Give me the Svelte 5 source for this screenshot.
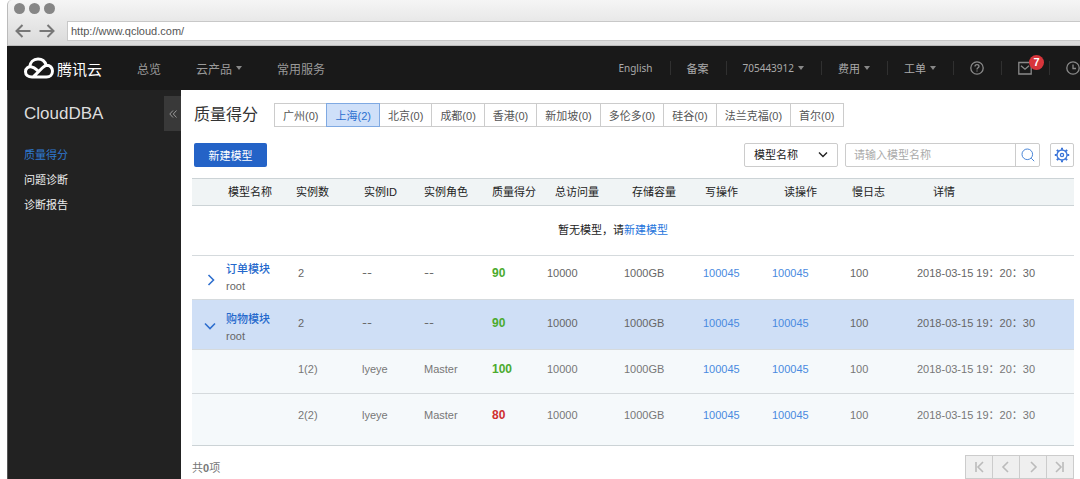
<script>
    let url = 'http://www.qcloud.com/';
    let region = '上海';
    let section = '质量得分';
    let searchField = 'name';
    let keyword = '';

    const sections = ['质量得分', '问题诊断', '诊断报告'];

    const regions = [
        { name: '广州', count: 0 },
        { name: '上海', count: 2 },
        { name: '北京', count: 0 },
        { name: '成都', count: 0 },
        { name: '香港', count: 0 },
        { name: '新加坡', count: 0 },
        { name: '多伦多', count: 0 },
        { name: '硅谷', count: 0 },
        { name: '法兰克福', count: 0 },
        { name: '首尔', count: 0 }
    ];

    const usage = { visits: '10000', storage: '1000GB', writes: '100045', reads: '100045', slow: '100', detail: '2018-03-15 19：20：30' };

    let models = [
        { name: '订单模块', owner: 'root', count: '2', score: 90, open: false, instances: [], ...usage },
        {
            name: '购物模块', owner: 'root', count: '2', score: 90, open: true, ...usage,
            instances: [
                { no: '1(2)', id: 'lyeye', role: 'Master', score: 100, ...usage },
                { no: '2(2)', id: 'lyeye', role: 'Master', score: 80, ...usage }
            ]
        }
    ];

    const pager = [
        { label: '首页', d: 'M4 2v10M11 2 6 7l5 5' },
        { label: '上一页', d: 'M9 2 4 7l5 5' },
        { label: '下一页', d: 'M5 2l5 5-5 5' },
        { label: '末页', d: 'M10 2v10M3 2l5 5-5 5' }
    ];
</script>

<svelte:head>
    <title>CloudDBA</title>
</svelte:head>

{#snippet usageCells(row)}
    <td class="score" class:bad={row.score <= 80}>{row.score}</td>
    <td>{row.visits}</td>
    <td>{row.storage}</td>
    <td><a href="#writes">{row.writes}</a></td>
    <td><a href="#reads">{row.reads}</a></td>
    <td>{row.slow}</td>
    <td>{row.detail}</td>
{/snippet}

<div class="window">
    <div class="chrome">
        <div class="dots"><i></i><i></i><i></i></div>
        <div class="address">
            <button aria-label="后退">
                <svg width="16" height="14" viewBox="0 0 16 14"><path d="M15.500 7H2M7.500 1 1.500 7l6 6" /></svg>
            </button>
            <button aria-label="前进">
                <svg width="16" height="14" viewBox="0 0 16 14"><path d="M.5 7h13.500M8.500 1l6 6-6 6" /></svg>
            </button>
            <input type="text" aria-label="地址" bind:value={url} />
        </div>
    </div>

    <header class="topbar">
        <a class="logo" href="#home">
            <svg width="30" height="22" viewBox="0 0 30 22">
                <path d="M5.500 10.300C6 5.300 9.400 2 14 2c4 0 7 2.300 8.200 6.200C26.200 8 28.500 10.900 28.500 14c0 3.500-2.600 6-6 6H8c-3.800 0-6.500-2-6.500-5.300 0-3.400 3-5.300 6.200-4.800 2 .3 3.400 1.300 4.800 2.700l2.500 2.300M9.500 19.600 18.500 10.800c1.300-1.300 2.400-2.300 4-2.600" />
            </svg>
            <span>腾讯云</span>
        </a>
        <nav class="primary">
            <a href="#overview">总览</a>
            <a href="#products">云产品<i class="caret"></i></a>
            <a href="#services">常用服务</a>
        </nav>
        <nav class="secondary">
            <a class="latin" href="#english">English</a>
            <a href="#beian">备案</a>
            <a class="latin" href="#account">705443912<i class="caret"></i></a>
            <a href="#billing">费用<i class="caret"></i></a>
            <a href="#tickets">工单<i class="caret"></i></a>
            <a href="#help" aria-label="帮助">
                <svg width="14" height="14" viewBox="0 0 14 14">
                    <circle cx="7" cy="7" r="6.200" />
                    <path d="M5 5.600C5 4.400 5.900 3.700 7 3.700s2 .7 2 1.800C9 6.800 7 6.900 7 8.400M7 9.500v1.100" />
                </svg>
            </a>
            <a class="mail" href="#messages" aria-label="消息">
                <svg width="14" height="14" viewBox="0 0 14 14"><path d="M.8 1.500h12.400v11.500H.8zM3 4.800l4 3.400 4-3.400" /></svg>
                <b class="badge">7</b>
            </a>
            <a href="#history" aria-label="最近访问">
                <svg width="14" height="14" viewBox="0 0 14 14"><circle cx="7" cy="7" r="6.200" /><path d="M7 3.500V7.500h3" /></svg>
            </a>
        </nav>
    </header>

    <div class="body">
        <aside>
            <div class="side-head">
                <h2>CloudDBA</h2>
                <button class="collapse" aria-label="收起">
                    <svg width="8" height="8" viewBox="0 0 8 8"><path d="M4 .5.800 4 4 7.500M7.500.5 4.300 4l3.200 3.500" /></svg>
                </button>
            </div>
            <nav>
                {#each sections as s}
                    <a href="#{s}" class:active={s === section} on:click={() => (section = s)}>{s}</a>
                {/each}
            </nav>
        </aside>

        <main>
            <div class="heading">
                <h1>质量得分</h1>
                <div class="regions">
                    {#each regions as r}
                        <button class:active={r.name === region} on:click={() => (region = r.name)}>{r.name}({r.count})</button>
                    {/each}
                </div>
            </div>

            <div class="toolbar">
                <button class="create">新建模型</button>
                <div class="picker">
                    <select aria-label="搜索字段" bind:value={searchField}>
                        <option value="name">模型名称</option>
                        <option value="id">实例ID</option>
                    </select>
                    <svg width="10" height="8" viewBox="0 0 10 8"><path d="M1 1.500l4 4 4-4" /></svg>
                </div>
                <form class="search" on:submit|preventDefault>
                    <input type="text" aria-label="模型名称" placeholder="请输入模型名称" bind:value={keyword} />
                    <button aria-label="搜索">
                        <svg width="14" height="14" viewBox="0 0 14 14"><circle cx="6.300" cy="6.300" r="5.300" /><path d="M10.200 10.200l3 3" /></svg>
                    </button>
                </form>
                <button class="settings" aria-label="设置">
                    <svg width="16" height="16" viewBox="0 0 16 16">
                        <circle cx="8" cy="8" r="5" />
                        <circle cx="8" cy="8" r="1.600" />
                        <path class="teeth" d="M8 .8v2M8 13.200v2M.8 8h2M13.200 8h2M2.900 2.900l1.400 1.400M11.700 11.700l1.400 1.400M2.900 13.100l1.400-1.400M11.700 4.300l1.400-1.400" />
                    </svg>
                </button>
            </div>

            <table>
                <colgroup>
                    <col class="c-toggle" /><col class="c-name" /><col class="c-count" /><col class="c-id" />
                    <col class="c-role" /><col class="c-score" /><col class="c-visits" /><col class="c-storage" />
                    <col class="c-writes" /><col class="c-reads" /><col class="c-slow" /><col />
                </colgroup>
                <thead>
                    <tr>
                        <td></td>
                        <th>模型名称</th>
                        <th class="flush">实例数</th>
                        <th>实例ID</th>
                        <th class="flush">实例角色</th>
                        <th class="flush">质量得分</th>
                        <th class="in">总访问量</th>
                        <th class="in">存储容量</th>
                        <th>写操作</th>
                        <th class="in-more">读操作</th>
                        <th>慢日志</th>
                        <th class="in-most">详情</th>
                    </tr>
                </thead>
                <tbody>
                    <tr class="empty">
                        <td colspan="12">暂无模型，请<a href="#create">新建模型</a></td>
                    </tr>
                    {#each models as m}
                        <tr class="model" class:open={m.open}>
                            <td class="toggle">
                                <button aria-label="展开 {m.name}" aria-expanded={m.open} on:click={() => (m.open = !m.open)}>
                                    {#if m.open}
                                        <svg width="12" height="12" viewBox="0 0 12 12"><path d="M1 3.500l5 5 5-5" /></svg>
                                    {:else}
                                        <svg width="12" height="12" viewBox="0 0 12 12"><path d="M4.500 1l5 5-5 5" /></svg>
                                    {/if}
                                </button>
                            </td>
                            <td class="name"><a href="#{m.name}">{m.name}</a><br />{m.owner}</td>
                            <td class="count">{m.count}</td>
                            <td class="none">--</td>
                            <td class="none">--</td>
                            {@render usageCells(m)}
                        </tr>
                        {#if m.open}
                            {#each m.instances as inst}
                                <tr class="instance">
                                    <td></td>
                                    <td></td>
                                    <td class="count">{inst.no}</td>
                                    <td>{inst.id}</td>
                                    <td>{inst.role}</td>
                                    {@render usageCells(inst)}
                                </tr>
                            {/each}
                        {/if}
                    {/each}
                </tbody>
            </table>

            <footer>
                <span>共<b>0</b>项</span>
                <div class="pager">
                    {#each pager as p}
                        <button aria-label={p.label} disabled>
                            <svg width="14" height="14" viewBox="0 0 14 14"><path d={p.d} /></svg>
                        </button>
                    {/each}
                </div>
            </footer>
        </main>
    </div>
</div>

<style>
    :global(body) { background: #fff; }
    * { box-sizing: border-box; }
    .window {
        display: flex; flex-direction: column; min-height: 100vh; margin-left: 7px;
        font-family: "Liberation Sans", "Noto Sans CJK SC", sans-serif; font-size: 11px; color: #666;
    }
    a { color: inherit; text-decoration: none; }
    button { padding: 0; border: none; background: none; font: inherit; color: inherit; cursor: pointer; display: flex; align-items: center; justify-content: center; }
    input, select { font: inherit; min-width: 0; }
    svg { display: block; fill: none; stroke: currentColor; }
    h1, h2 { margin: 0; font-weight: 400; }

    .chrome { height: 46px; padding-top: 3px; background: linear-gradient(#f5f5f5, #dadada); border: 1px solid #bbb; border-width: 0 0 1px 1px; border-top-left-radius: 5px; }
    .dots { display: flex; gap: 4px; padding-left: 6px; }
    .dots i { width: 11px; height: 11px; border-radius: 50%; background: #868686; }
    .address { display: flex; align-items: center; margin-top: 7px; padding-left: 7px; gap: 8px; color: #777; }
    .address svg { stroke-width: 2; }
    .address input { flex: 1; height: 20px; margin-left: 4px; padding: 0 3px; border: 1px solid #c8c8c8; border-right: none; color: #555; background: #fff; }

    .topbar { display: flex; align-items: center; height: 44px; padding-left: 17px; background: #191919; color: #aaa; white-space: nowrap; }
    .logo { display: flex; align-items: center; gap: 3px; color: #fff; font-size: 15px; }
    .logo svg { stroke-width: 3; }
    .primary { display: flex; gap: 35px; margin-left: 35px; font-size: 12px; color: #999; }
    .primary a { display: flex; align-items: center; }
    .caret { margin-left: 4px; border: 3px solid transparent; border-top: 4px solid #888; border-bottom: none; }
    .secondary { display: flex; margin-left: auto; color: #aaa; }
    .secondary a { display: flex; align-items: center; height: 14px; padding: 0 17px 0 16px; border-left: 1px solid #303030; }
    .secondary a:first-child { border-left: none; }
    .secondary a:last-child { padding-right: 0; }
    .secondary svg { stroke: #8a8a8a; stroke-width: 1.3; }
    .latin { font-family: "Noto Sans", "Noto Sans CJK SC", sans-serif; font-size: 10px; }
    .mail { position: relative; }
    .badge { position: absolute; left: 27px; top: -6px; width: 15px; height: 15px; border-radius: 50%; background: #d7353b; color: #fff; line-height: 15px; text-align: center; }

    .body { display: flex; flex: 1; }
    aside { flex: 0 0 174px; background: #222; color: #eee; border-left: 1px solid #555; }
    .side-head { display: flex; align-items: center; justify-content: space-between; padding: 6px 0 12px 16px; }
    h2 { font-size: 17px; color: #ddd; }
    .collapse { width: 17px; height: 35px; background: #393939; color: #999; }
    aside nav { display: flex; flex-direction: column; padding-left: 16px; }
    aside nav a { line-height: 25px; }
    aside nav a.active { color: #2f7ad1; }

    main { flex: 1; min-width: 0; padding: 13px 6px 0 11px; }
    .heading { display: flex; align-items: center; gap: 16px; padding-left: 2px; white-space: nowrap; }
    h1 { font-size: 16px; line-height: 24px; color: #333; }
    .regions { display: flex; }
    .regions button { height: 24px; padding: 0 8px; border: 1px solid #ccc; margin-left: -1px; color: #555; }
    .regions button:first-child { margin-left: 0; }
    .regions .active { position: relative; background: #cfe0f9; border-color: #7fa9e2; color: #2a6fd0; }

    .toolbar { display: flex; align-items: center; margin: 16px 0 11px; padding-left: 2px; }
    .create { width: 73px; height: 24px; margin-right: auto; border-radius: 2px; background: #2463c7; color: #fff; }
    .picker { display: grid; align-items: center; width: 94px; margin-right: 7px; color: #222; }
    .picker select { grid-area: 1 / 1; height: 24px; padding: 0 9px; appearance: none; background: #fff; border: 1px solid #ccc; border-radius: 2px; color: inherit; }
    .picker svg { grid-area: 1 / 1; justify-self: end; margin-right: 10px; stroke-width: 1.4; pointer-events: none; }
    .search { display: flex; width: 195px; height: 24px; margin-right: 10px; border: 1px solid #ccc; border-radius: 2px; }
    .search input { flex: 1; padding: 0 8px; border: none; background: none; }
    .search input::placeholder { color: #aaa; }
    .search button { width: 24px; border-left: 1px solid #ccc; color: #4a86d8; }
    .settings { width: 24px; height: 24px; border: 1px solid #ccc; border-radius: 2px; color: #3a74d8; }
    .settings svg { stroke-width: 1.3; }
    .teeth { stroke-width: 2; }

    table { width: 100%; table-layout: fixed; border-collapse: separate; border-spacing: 0; line-height: 17px; white-space: nowrap; }
    th, td { padding: 0; text-align: left; vertical-align: top; font-weight: 400; }
    .c-toggle { width: 34px; }
    .c-name { width: 70px; }
    .c-count { width: 66px; }
    .c-id { width: 62px; }
    .c-role { width: 68px; }
    .c-score { width: 55px; }
    .c-visits { width: 77px; }
    .c-storage { width: 79px; }
    .c-writes { width: 69px; }
    .c-reads { width: 78px; }
    .c-slow { width: 67px; }
    thead th, thead td { height: 28px; padding-left: 2px; vertical-align: middle; background: #f0f4f5; border: 1px solid #ccd3d6; border-width: 1px 0; color: #222; }
    thead .flush { padding-left: 0; }
    thead .in { padding-left: 8px; }
    thead .in-more { padding-left: 12px; }
    thead .in-most { padding-left: 16px; }
    tbody td { border-bottom: 1px solid #d5dadd; }
    .empty td { height: 50px; padding-right: 40px; vertical-align: middle; text-align: center; color: #222; }
    td a { color: #4a8ae0; }
    .empty a { color: #1e74dc; }
    .model td { height: 44px; padding-top: 9px; }
    .model .name { padding-top: 5px; }
    .model .name a { color: #2468cc; font-weight: 500; }
    .model .toggle { padding: 18px 0 0 12px; color: #2f6fce; }
    .toggle svg { stroke-width: 1.6; }
    .open td { height: 50px; padding-top: 15px; background: #cfdff6; }
    .open .name { padding-top: 11px; }
    .open .toggle { padding-top: 20px; }
    .instance td { height: 44px; padding-top: 11px; background: #f5f9fb; color: #777; }
    .instance:last-child td { height: 52px; padding-top: 13px; border-color: #ccd3d6; }
    tbody .count { padding-left: 2px; }
    .none { font-family: Inter, sans-serif; }
    td.score, .instance td.score { font-size: 12px; font-weight: 700; color: #4bab2f; }
    td.score.bad, .instance td.score.bad { color: #cf2f2f; }

    footer { display: flex; align-items: center; justify-content: space-between; margin-top: 9px; color: #777; }
    .pager { display: flex; }
    .pager button { width: 28px; height: 24px; margin-left: -1px; border: 1px solid #ccc; background: #efefef; color: #bbb; }
    .pager svg { stroke-width: 1.6; }
</style>
